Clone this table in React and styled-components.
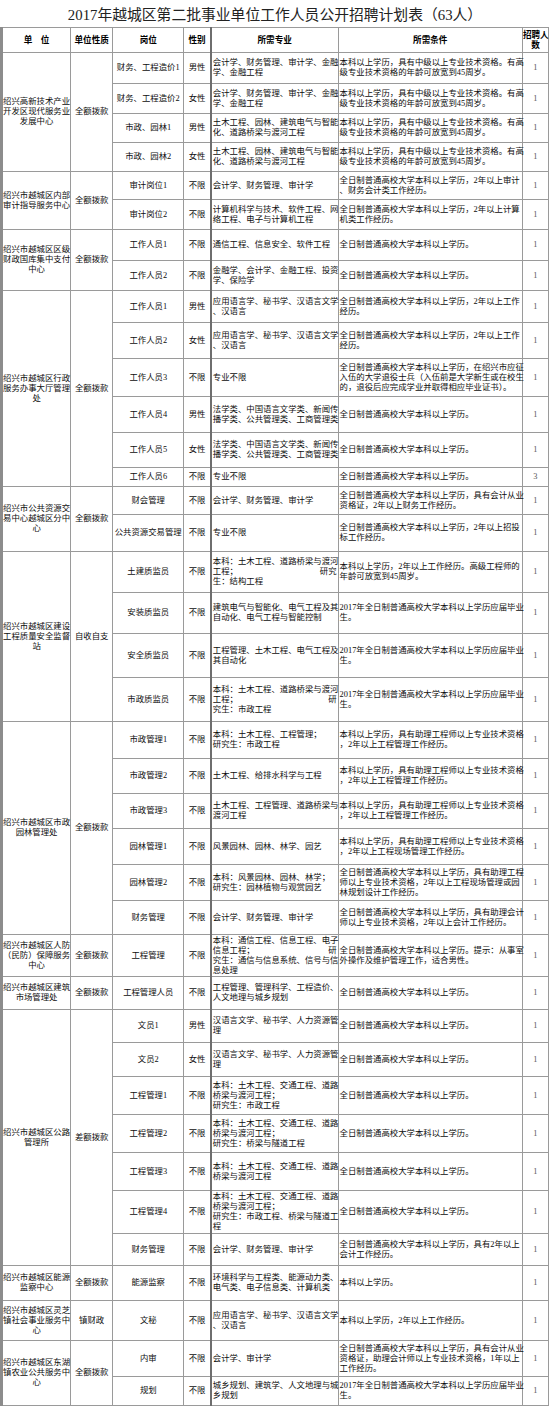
import React from "react";
import styled, { createGlobalStyle } from "styled-components";

const GlobalStyle = createGlobalStyle`
  html, body {
    margin: 0;
    padding: 0;
    background: #fff;
  }
  body {
    font-family: "Liberation Serif", "Noto Sans CJK SC", serif;
    color: #111;
  }
`;

const Page = styled.div`
  width: 550px;
  display: flex;
  flex-direction: column;
`;

const Title = styled.h1`
  margin: 0;
  height: 27px;
  display: flex;
  align-items: center;
  justify-content: center;
  font-family: "Liberation Serif", "Noto Sans CJK SC", serif;
  font-size: 14.8px;
  font-weight: 400;
  color: #222;
`;

const Table = styled.table`
  width: 549px;
  table-layout: fixed;
  border-collapse: collapse;
  border-left: 3px solid #8c8c8c;
  font-size: 8.4px;
  line-height: 10px;
`;

const Row = styled.tr`
  height: ${(p) => p.$h}px;
`;

const HeadCell = styled.th`
  border: 1px solid #9a9a9a;
  border-left: ${(p) => (p.$strong ? "2px solid #6e6e6e" : "1px solid #9a9a9a")};
  padding: 0;
  font-size: 8.6px;
  font-weight: 700;
  color: #000;
  text-align: center;
  vertical-align: middle;
  white-space: pre;
`;

const Cell = styled.td`
  border: 1px solid #9a9a9a;
  border-left: ${(p) => (p.$strong ? "2px solid #6e6e6e" : "1px solid #9a9a9a")};
  padding: 0 ${(p) => (p.$left ? "1px" : "0")};
  text-align: ${(p) => (p.$left ? "left" : "center")};
  vertical-align: middle;
  color: ${(p) => (p.$num ? "#555" : "#0d0d0d")};
  overflow: visible;
`;

const Line = styled.span`
  display: block;
  white-space: pre;
`;

const SpreadLine = styled.span`
  display: flex;
  justify-content: space-between;
  white-space: pre;
`;

function Lines({ text }) {
  return text.split("\n").map((ln, i) => {
    if (ln.includes("|")) {
      const [a, b] = ln.split("|");
      return (
        <SpreadLine key={i}>
          <span>{a}</span>
          <span>{b}</span>
        </SpreadLine>
      );
    }
    return <Line key={i}>{ln}</Line>;
  });
}

const C_MID = "本科以上学历，具有中级以上专业技术资格。有高\n级专业技术资格的年龄可放宽到45周岁。";
const C_FULL = "全日制普通高校大学本科以上学历。";
const C_WORK = "全日制普通高校大学本科以上学历，2年以上工作\n经历。";
const C_2017 = "2017年全日制普通高校大学本科以上学历应届毕业\n生。";
const C_SZ = "本科以上学历，具有助理工程师以上专业技术资格\n，2年以上工程管理工作经历。";
const M_LANG = "应用语言学、秘书学、汉语言文学\n、汉语言";
const M_LAW = "法学类、中国语言文学类、新闻传\n播学类、公共管理类、工商管理类";
const M_ACC = "会计学、财务管理、审计学";
const M_WEN = "汉语言文学、秘书学、人力资源管\n理";

const groups = [
  {
    unit: "绍兴高新技术产业\n开发区现代服务业\n发展中心",
    type: "全额拨款",
    rows: [
      [31, "财务、工程造价1", "男性", "会计学、财务管理、审计学、金融\n学、金融工程", C_MID, "1"],
      [30, "财务、工程造价2", "女性", "会计学、财务管理、审计学、金融\n学、金融工程", C_MID, "1"],
      [29, "市政、园林1", "男性", "土木工程、园林、建筑电气与智能\n化、道路桥梁与渡河工程", C_MID, "1"],
      [29, "市政、园林2", "女性", "土木工程、园林、建筑电气与智能\n化、道路桥梁与渡河工程", C_MID, "1"],
    ],
  },
  {
    unit: "绍兴市越城区内部\n审计指导服务中心",
    type: "全额拨款",
    rows: [
      [28, "审计岗位1", "不限", M_ACC, "全日制普通高校大学本科以上学历，2年以上审计\n、财务会计类工作经历。", "1"],
      [30, "审计岗位2", "不限", "计算机科学与技术、软件工程、网\n络工程、电子与计算机工程", "全日制普通高校大学本科以上学历，2年以上计算\n机类工作经历。", "1"],
    ],
  },
  {
    unit: "绍兴市越城区区级\n财政国库集中支付\n中心",
    type: "全额拨款",
    rows: [
      [31, "工作人员1", "不限", "通信工程、信息安全、软件工程", C_FULL, "1"],
      [30, "工作人员2", "不限", "金融学、会计学、金融工程、投资\n学、保险学", C_FULL, "1"],
    ],
  },
  {
    unit: "绍兴市越城区行政\n服务办事大厅管理\n处",
    type: "全额拨款",
    rows: [
      [32, "工作人员1", "男性", M_LANG, C_WORK, "1"],
      [36, "工作人员2", "女性", M_LANG, C_WORK, "1"],
      [38, "工作人员3", "不限", "专业不限", "全日制普通高校大学本科以上学历，在绍兴市应征\n入伍的大学退役士兵（入伍前是大学新生或在校生\n的，退役后应完成学业并取得相应毕业证书）。", "1"],
      [36, "工作人员4", "男性", M_LAW, C_FULL, "1"],
      [35, "工作人员5", "女性", M_LAW, C_FULL, "1"],
      [19, "工作人员6", "不限", "专业不限", C_FULL, "3"],
    ],
  },
  {
    unit: "绍兴市公共资源交\n易中心越城区分中\n心",
    type: "全额拨款",
    rows: [
      [28, "财会管理", "不限", M_ACC, "全日制普通高校大学本科以上学历，具有会计从业\n资格证，2年以上财务工作经历。", "1"],
      [37, "公共资源交易管理", "不限", "专业不限", "全日制普通高校大学本科以上学历，2年以上招投\n标工作经历。", "1"],
    ],
  },
  {
    unit: "绍兴市越城区建设\n工程质量安全监督\n站",
    type: "自收自支",
    rows: [
      [41, "土建质监员", "不限", "本科：土木工程、道路桥梁与渡河\n工程；|研究\n生：结构工程", "本科以上学历，2年以上工作经历。高级工程师的\n年龄可放宽到45周岁。", "1"],
      [41, "安装质监员", "不限", "建筑电气与智能化、电气工程及其\n自动化、电气工程与智能控制", C_2017, "1"],
      [44, "安全质监员", "不限", "工程管理、土木工程、电气工程及\n其自动化", C_2017, "1"],
      [44, "市政质监员", "不限", "本科：土木工程、道路桥梁与渡河\n工程；|研\n究生：市政工程", C_2017, "1"],
    ],
  },
  {
    unit: "绍兴市越城区市政\n园林管理处",
    type: "全额拨款",
    rows: [
      [37, "市政管理1", "不限", "本科：土木工程、工程管理；\n研究生：市政工程", C_SZ, "1"],
      [35, "市政管理2", "不限", "土木工程、给排水科学与工程", C_SZ, "1"],
      [35, "市政管理3", "不限", "土木工程、工程管理、道路桥梁与\n渡河工程", C_SZ, "1"],
      [36, "园林管理1", "不限", "风景园林、园林、林学、园艺", "本科以上学历，具有助理工程师以上专业技术资格\n，2年以上工程现场管理工作经历。", "1"],
      [36, "园林管理2", "不限", "本科：风景园林、园林、林学；\n研究生：园林植物与观赏园艺", "全日制普通高校大学本科以上学历，具有助理工程\n师以上专业技术资格，2年以上工程现场管理或园\n林规划设计工作经历。", "1"],
      [34, "财务管理", "不限", M_ACC, "全日制普通高校大学本科以上学历，具有助理会计\n师以上专业技术资格，2年以上会计工作经历。", "1"],
    ],
  },
  {
    unit: "绍兴市越城区人防\n（民防）保障服务\n中心",
    type: "全额拨款",
    rows: [
      [42, "工程管理", "不限", "本科：通信工程、信息工程、电子\n信息工程；|研\n究生：通信与信息系统、信号与信\n息处理", "全日制普通高校大学本科以上学历。提示：从事室\n外操作及维护管理工作，适合男性。", "1"],
    ],
  },
  {
    unit: "绍兴市越城区建筑\n市场管理处",
    type: "全额拨款",
    rows: [
      [33, "工程管理人员", "不限", "工程管理、管理科学、工程造价、\n人文地理与城乡规划", C_FULL, "1"],
    ],
  },
  {
    unit: "绍兴市越城区公路\n管理所",
    type: "差额拨款",
    rows: [
      [33, "文员1", "男性", M_WEN, C_FULL, "1"],
      [34, "文员2", "女性", M_WEN, C_FULL, "1"],
      [38, "工程管理1", "不限", "本科：土木工程、交通工程、道路\n桥梁与渡河工程；\n研究生：市政工程", C_FULL, "1"],
      [38, "工程管理2", "不限", "本科：土木工程、交通工程、道路\n桥梁与渡河工程；\n研究生：桥梁与隧道工程", C_FULL, "1"],
      [38, "工程管理3", "不限", "本科：土木工程、交通工程、道路\n桥梁与渡河工程", C_FULL, "1"],
      [43, "工程管理4", "不限", "本科：土木工程、交通工程、道路\n桥梁与渡河工程；\n研究生：市政工程、桥梁与隧道工\n程", C_FULL, "1"],
      [32, "财务管理", "不限", M_ACC, "全日制普通高校大学本科以上学历，具有2年以上\n会计工作经历。", "1"],
    ],
  },
  {
    unit: "绍兴市越城区能源\n监察中心",
    type: "全额拨款",
    rows: [
      [35, "能源监察", "不限", "环境科学与工程类、能源动力类、\n电气类、电子信息类、计算机类", "本科以上学历。", "1"],
    ],
  },
  {
    unit: "绍兴市越城区灵芝\n镇社会事业服务中\n心",
    type: "镇财政",
    rows: [
      [40, "文秘", "不限", M_LANG, "本科以上学历，2年以上工作经历。", "1"],
    ],
  },
  {
    unit: "绍兴市越城区东湖\n镇农业公共服务中\n心",
    type: "全额拨款",
    rows: [
      [36, "内审", "不限", "会计学、审计学", "全日制普通高校大学本科以上学历，具有会计从业\n资格证，助理会计师以上专业技术资格，1年以上\n工作经历。", "1"],
      [29, "规划", "不限", "城乡规划、建筑学、人文地理与城\n乡规划", C_2017, "1"],
    ],
  },
];

const widths = [69, 42, 71, 27, 127, 184, 26];

export default function App() {
  return (
    <Page>
      <GlobalStyle />
      <Title>2017年越城区第二批事业单位工作人员公开招聘计划表（63人）</Title>
      <Table>
        <colgroup>
          {widths.map((w, i) => (
            <col key={i} style={{ width: w }} />
          ))}
        </colgroup>
        <tbody>
          <Row $h={25}>
            <HeadCell>单　位</HeadCell>
            <HeadCell>单位性质</HeadCell>
            <HeadCell>岗位</HeadCell>
            <HeadCell>性别</HeadCell>
            <HeadCell $strong>所需专业</HeadCell>
            <HeadCell>所需条件</HeadCell>
            <HeadCell>{"招聘人\n数"}</HeadCell>
          </Row>
          {groups.map((g, gi) =>
            g.rows.map(([h, post, sex, major, cond, num], ri) => (
              <Row key={`${gi}-${ri}`} $h={h}>
                {ri === 0 && (
                  <>
                    <Cell rowSpan={g.rows.length}>
                      <Lines text={g.unit} />
                    </Cell>
                    <Cell rowSpan={g.rows.length}>{g.type}</Cell>
                  </>
                )}
                <Cell>{post}</Cell>
                <Cell>{sex}</Cell>
                <Cell $left $strong>
                  <Lines text={major} />
                </Cell>
                <Cell $left>
                  <Lines text={cond} />
                </Cell>
                <Cell $num>{num}</Cell>
              </Row>
            ))
          )}
        </tbody>
      </Table>
    </Page>
  );
}
